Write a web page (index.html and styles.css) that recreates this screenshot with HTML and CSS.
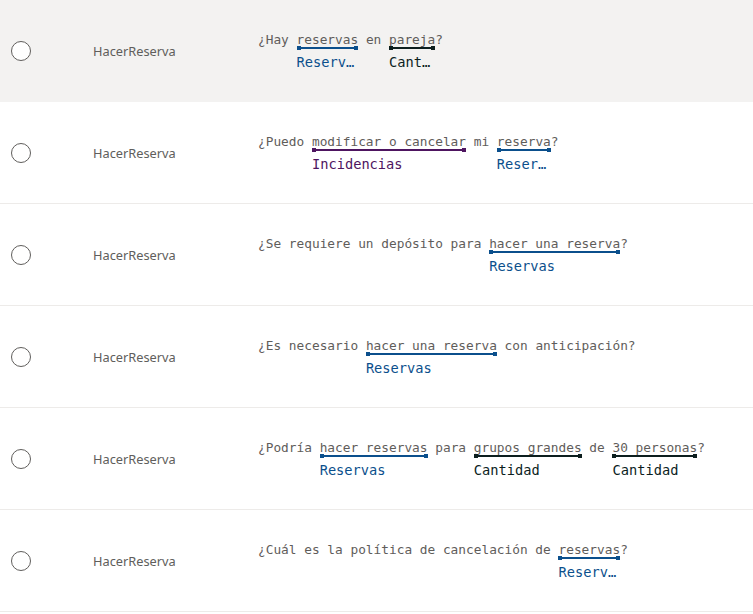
FILE: index.html
```html
<!DOCTYPE html>
<html lang="es">
<head>
<meta charset="utf-8">
<title>Expresiones</title>
<link rel="stylesheet" href="styles.css">
</head>
<body>
<div class="list">
  <div class="row selected">
    <div class="cell-radio"><span class="radio"></span></div>
    <div class="intent">HacerReserva</div>
    <div class="utt"><span>¿Hay </span><span class="ent blue"><span class="w">reservas</span><span class="bar"><i></i><i></i></span><span class="lbl">Reservas</span></span><span> en </span><span class="ent dark"><span class="w">pareja</span><span class="bar"><i></i><i></i></span><span class="lbl">Cantidad</span></span><span>?</span></div>
  </div>
  <div class="row">
    <div class="cell-radio"><span class="radio"></span></div>
    <div class="intent">HacerReserva</div>
    <div class="utt"><span>¿Puedo </span><span class="ent purple"><span class="w">modificar o cancelar</span><span class="bar"><i></i><i></i></span><span class="lbl">Incidencias</span></span><span> mi </span><span class="ent blue"><span class="w">reserva</span><span class="bar"><i></i><i></i></span><span class="lbl">Reservas</span></span><span>?</span></div>
  </div>
  <div class="row">
    <div class="cell-radio"><span class="radio"></span></div>
    <div class="intent">HacerReserva</div>
    <div class="utt"><span>¿Se requiere un depósito para </span><span class="ent blue"><span class="w">hacer una reserva</span><span class="bar"><i></i><i></i></span><span class="lbl">Reservas</span></span><span>?</span></div>
  </div>
  <div class="row">
    <div class="cell-radio"><span class="radio"></span></div>
    <div class="intent">HacerReserva</div>
    <div class="utt"><span>¿Es necesario </span><span class="ent blue"><span class="w">hacer una reserva</span><span class="bar"><i></i><i></i></span><span class="lbl">Reservas</span></span><span> con anticipación?</span></div>
  </div>
  <div class="row">
    <div class="cell-radio"><span class="radio"></span></div>
    <div class="intent">HacerReserva</div>
    <div class="utt"><span>¿Podría </span><span class="ent blue"><span class="w">hacer reservas</span><span class="bar"><i></i><i></i></span><span class="lbl">Reservas</span></span><span> para </span><span class="ent dark"><span class="w">grupos grandes</span><span class="bar"><i></i><i></i></span><span class="lbl">Cantidad</span></span><span> de </span><span class="ent dark"><span class="w">30 personas</span><span class="bar"><i></i><i></i></span><span class="lbl">Cantidad</span></span><span>?</span></div>
  </div>
  <div class="row">
    <div class="cell-radio"><span class="radio"></span></div>
    <div class="intent">HacerReserva</div>
    <div class="utt"><span>¿Cuál es la política de cancelación de </span><span class="ent blue"><span class="w">reservas</span><span class="bar"><i></i><i></i></span><span class="lbl">Reservas</span></span><span>?</span></div>
  </div>
</div>
</body>
</html>
```

FILE: styles.css
```css
html, body {
  margin: 0;
  padding: 0;
  background: #ffffff;
}

.list {
  width: 753px;
}

.row {
  display: grid;
  grid-template-columns: 93px 165px 1fr;
  align-items: center;
  height: 101px;
  border-bottom: 1px solid #edebe9;
  background: #ffffff;
}

.row.selected {
  background: #f3f2f1;
  border-bottom-color: #f3f2f1;
}

.cell-radio {
  padding-left: 11px;
  display: flex;
  align-items: center;
}

.radio {
  display: block;
  width: 18px;
  height: 18px;
  border: 1px solid #605e5c;
  border-radius: 50%;
  background: #ffffff;
}

.intent {
  font-family: "Noto Sans", "Liberation Sans", sans-serif;
  font-size: 12.8px;
  color: #605e5c;
  line-height: 18px;
}

.utt {
  align-self: start;
  margin-top: 32px;
  font-family: "DejaVu Sans Mono", "Liberation Mono", monospace;
  font-size: 12.8px;
  line-height: 15px;
  color: #5f5d5b;
  white-space: pre;
}

.ent {
  display: inline-flex;
  flex-direction: column;
  vertical-align: top;
}

.ent .w {
  line-height: 15px;
  color: #5f5d5b;
}

.ent .bar {
  display: flex;
  justify-content: space-between;
  height: 4px;
  margin-top: -1px;
  background: linear-gradient(currentColor, currentColor) center / 100% 2px no-repeat;
}

.ent .bar i {
  display: block;
  width: 4px;
  height: 4px;
  background: currentColor;
}

.ent .lbl {
  contain: inline-size;
  margin-top: 3px;
  font-size: 13.7px;
  line-height: 18px;
  white-space: nowrap;
  overflow: hidden;
  text-overflow: ellipsis;
}

.ent.blue { color: #0b4f8c; }
.ent.dark { color: #0c1e1e; }
.ent.purple { color: #4e1560; }
```
